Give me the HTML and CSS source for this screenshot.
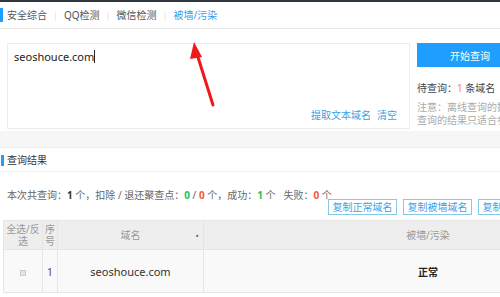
FILE: index.html
```html
<!DOCTYPE html>
<html lang="zh-CN">
<head>
    <meta charset="UTF-8">
    <meta name="viewport" content="width=device-width, initial-scale=1.0">
    <title>被墙/污染检测</title>
    <link rel="stylesheet" href="styles.css">
</head>
<body>
    <div class="page">
        <div class="topbar"></div>
        <nav class="tabs">
            <span class="tab first">安全综合</span>
            <span class="sep">|</span>
            <span class="tab">QQ检测</span>
            <span class="sep">|</span>
            <span class="tab">微信检测</span>
            <span class="sep">|</span>
            <span class="tab active">被墙/污染</span>
        </nav>
        <section class="query">
            <div class="domain-box">
                <div class="domain-text">seoshouce.com<span class="caret"></span></div>
                <div class="box-links"><a>提取文本域名</a><a>清空</a></div>
            </div>
            <div class="side">
                <button class="start-btn">开始查询</button>
                <div class="pending">待查询：<span class="orange">1</span> 条域名</div>
                <div class="note">注意：离线查询的数据仅供参考，离线<br>查询的结果只适合参考，请以实际为准</div>
            </div>
        </section>
        <section class="results">
            <div class="section-title">查询结果</div>
            <div class="stats">本次共查询：<b>1</b> 个，扣除 / 退还聚查点：<b class="green">0</b> / <b class="red">0</b> 个，成功：<b class="green">1</b> 个&nbsp;&nbsp; 失败：<b class="red">0</b> 个</div>
            <div class="copy-row">
                <button class="copy-btn">复制正常域名</button>
                <button class="copy-btn">复制被墙域名</button>
                <button class="copy-btn">复制污染域名</button>
            </div>
            <table class="result-table">
                <thead>
                    <tr>
                        <th class="c-check">全选/反选</th>
                        <th class="c-num">序号</th>
                        <th class="c-domain">域名<span class="sort-dot">•</span></th>
                        <th class="c-state">被墙/污染</th>
                    </tr>
                </thead>
                <tbody>
                    <tr>
                        <td class="c-check"><span class="checkbox"></span></td>
                        <td class="c-num">1</td>
                        <td class="c-domain">seoshouce.com</td>
                        <td class="c-state"><b>正常</b></td>
                    </tr>
                </tbody>
            </table>
        </section>
        <svg class="arrow" width="40" height="80" viewBox="0 0 40 80">
            <line x1="33" y1="75" x2="17" y2="24" stroke="#f01818" stroke-width="3" stroke-linecap="round"/>
            <polygon points="14,12 22,27 10,29" fill="#f01818"/>
        </svg>
    </div>
</body>
</html>
```

FILE: styles.css
```css
* {
    box-sizing: border-box;
    margin: 0;
    padding: 0;
}
body {
    font-family: "Noto Sans", "Noto Sans CJK SC", sans-serif;
    font-size: 10px;
    color: #333;
    background: #fff;
    overflow: hidden;
}
.page {
    position: relative;
    width: 660px;
    background: #f6f6f6;
}
.topbar {
    height: 2px;
    background: #2e3640;
}
.tabs {
    display: flex;
    align-items: center;
    height: 27px;
    background: #fff;
    border-bottom: 1px solid #e9e9e9;
    color: #555;
}
.tab {
    padding: 0 6px;
    line-height: 14px;
}
.tab.first {
    border-left: 3px solid #1e9fff;
    padding-left: 4px;
}
.tab.active {
    color: #3b9fe6;
}
.sep {
    color: #e0e0e0;
    font-size: 9px;
}
.query {
    display: flex;
    gap: 7px;
    padding: 14px 0 2px 7px;
    background: #fff;
}
.domain-box {
    width: 403px;
    height: 86px;
    border: 1px solid #ececec;
    display: flex;
    flex-direction: column;
    justify-content: space-between;
    padding: 5px 6px 6px;
}
.domain-text {
    font-size: 11px;
    color: #222;
    line-height: 16px;
}
.caret {
    display: inline-block;
    width: 1px;
    height: 13px;
    background: #222;
    vertical-align: -2px;
}
.box-links {
    display: flex;
    justify-content: flex-end;
    gap: 6px;
    padding-right: 6px;
    color: #3b9fe6;
}
.side {
    width: 230px;
    white-space: nowrap;
}
.start-btn {
    display: block;
    width: 106px;
    height: 24px;
    border: none;
    background: #1e9fff;
    color: #fff;
    font-family: inherit;
    font-size: 10px;
}
.pending {
    margin-top: 15px;
    color: #444;
    line-height: 13px;
}
.orange {
    color: #ff8a1e;
}
.note {
    margin-top: 6px;
    color: #aaa;
    line-height: 13px;
}
.results {
    margin-top: 16px;
    background: #fff;
}
.section-title {
    position: relative;
    height: 25px;
    display: flex;
    align-items: center;
    border-top: 1px solid #eee;
    border-bottom: 1px solid #eee;
    padding-left: 7px;
    color: #333;
}
.section-title::before {
    content: "";
    position: absolute;
    left: 1px;
    top: 7px;
    width: 3px;
    height: 11px;
    background: #1e9fff;
}
.stats {
    padding: 16px 0 0 7px;
    color: #666;
    line-height: 14px;
}
.stats b {
    color: #333;
}
.stats .green {
    color: #2cbb5a;
}
.stats .red {
    color: #f5573b;
}
.copy-row {
    display: flex;
    gap: 6px;
    padding: 0 0 5px 328px;
    margin-top: -3px;
}
.copy-btn {
    width: 69px;
    height: 16px;
    border: 1px solid #86c8ea;
    background: #fff;
    color: #3b9fe6;
    font-family: inherit;
    font-size: 10px;
    line-height: 14px;
}
.result-table {
    margin-left: 3px;
    width: 650px;
    border-collapse: collapse;
    table-layout: fixed;
}
.result-table th,
.result-table td {
    border: 1px solid #e6e6e6;
    text-align: center;
    font-weight: normal;
}
.result-table th {
    height: 29px;
    background: #eeeeee;
    color: #999;
    line-height: 12px;
}
.result-table td {
    height: 43px;
    background: #f9f9f9;
    color: #333;
    font-size: 11px;
}
.c-check {
    width: 39px;
}
.c-num {
    width: 15px;
}
.c-domain {
    width: 146px;
    position: relative;
}
.sort-dot {
    position: absolute;
    right: 4px;
    top: 9px;
    color: #666;
    font-size: 9px;
}
.result-table td.c-num {
    color: #555;
}
.checkbox {
    display: inline-block;
    width: 6px;
    height: 6px;
    border: 1px solid #ccc;
    background: #e4e4e4;
}
.c-state b {
    font-size: 10px;
    font-weight: bold;
    color: #222;
}
.arrow {
    position: absolute;
    left: 180px;
    top: 30px;
}
```
